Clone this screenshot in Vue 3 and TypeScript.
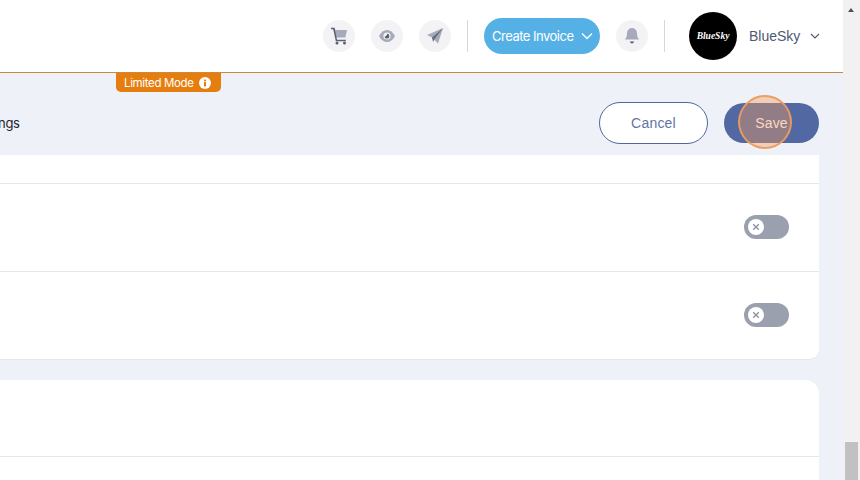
<script setup lang="ts">
const rows: number[] = [1, 2]
</script>

<template>
  <div class="page">
    <div class="main">
      <header class="topbar">
        <button class="round">
          <svg width="20" height="20" viewBox="0 0 20 20">
            <path d="M2 2.5h3l.6 2" fill="none" stroke="#5a6070" stroke-width="1.5" />
            <path d="M5.3 4H18l-1.6 7.6H6.8z" fill="#a6aaba" />
            <path d="M5 3l2.4 11.4h9.4" fill="none" stroke="#5a6070" stroke-width="1.5" />
            <circle cx="8" cy="17" r="1.5" fill="#5a6070" />
            <circle cx="15.5" cy="17" r="1.5" fill="#5a6070" />
          </svg>
        </button>
        <button class="round">
          <svg width="18" height="14" viewBox="0 0 18 14">
            <path d="M1 7C3 3 6 1 9 1s6 2 8 6c-2 4-5 6-8 6S3 11 1 7z" fill="#a6aaba" />
            <circle cx="9" cy="7" r="3.6" fill="#f3f3f5" />
            <path d="M9 4.8a2.4 2.4 0 1 1-2.4 2.6c1.4.2 2.6-1 2.4-2.6z" fill="#5a6070" />
          </svg>
        </button>
        <button class="round">
          <svg width="18" height="18" viewBox="0 0 18 18">
            <path d="M17 1L1 8l5 2.4z" fill="#a6aaba" />
            <path d="M17 1L6 10.4l6 6z" fill="#a6aaba" />
            <path d="M17 1L6 10.4l1 4.6 1.6-3z" fill="#666c7c" />
          </svg>
        </button>
        <span class="divider first"></span>
        <button class="create">
          <span>Create Invoice</span>
          <svg width="12" height="8" viewBox="0 0 12 8">
            <path d="M1 1.5l5 5 5-5" fill="none" stroke="#fff" stroke-width="1.3" />
          </svg>
        </button>
        <button class="round bell">
          <svg width="16" height="18" viewBox="0 0 16 18">
            <path d="M8 1c3 0 5 2.4 5 5.6 0 3 .8 4.6 2.2 6H.8C2.2 11.2 3 9.6 3 6.6 3 3.4 5 1 8 1z" fill="#a6aaba" />
            <path d="M5.8 14.6h4.4c-.4 1.3-1.2 2-2.2 2s-1.8-.7-2.2-2z" fill="#5a6070" />
          </svg>
        </button>
        <span class="divider second"></span>
        <div class="avatar"><span>BlueSky</span></div>
        <span class="account">BlueSky</span>
        <svg class="caret" width="10" height="6" viewBox="0 0 10 6">
          <path d="M1 1l4 4 4-4" fill="none" stroke="#4d5a72" stroke-width="1.1" />
        </svg>
      </header>

      <div class="content">
        <div class="limited">
          <span>Limited Mode</span>
          <svg width="12" height="12" viewBox="0 0 12 12">
            <circle cx="6" cy="6" r="6" fill="#fff" />
            <rect x="5" y="5" width="2" height="4.4" fill="#e67e0f" />
            <rect x="5" y="2.6" width="2" height="1.6" fill="#e67e0f" />
          </svg>
        </div>
        <div class="actions">
          <span class="crumb">ngs</span>
          <button class="cancel">Cancel</button>
          <button class="save">
            Save
            <span class="ripple"></span>
          </button>
        </div>
        <section class="card one">
          <div class="stub"></div>
          <div v-for="r in rows" :key="r" class="row">
            <div class="toggle">
              <span class="knob">
                <svg width="8" height="8" viewBox="0 0 8 8">
                  <path d="M1.2 1.2l5.6 5.6M6.8 1.2L1.2 6.8" stroke="#8f95a5" stroke-width="1.4" />
                </svg>
              </span>
            </div>
          </div>
        </section>
        <section class="card two">
          <div class="head"></div>
        </section>
      </div>
    </div>
    <aside class="scrollbar">
      <span class="arrow"></span>
      <span class="thumb"></span>
    </aside>
  </div>
</template>

<style>
html, body { margin: 0; overflow: hidden; }
</style>

<style scoped>
.page {
  width: 860px;
  height: 480px;
  display: flex;
  overflow: hidden;
  font-family: "Liberation Sans", Arial, sans-serif;
}
.main {
  width: 843px;
  height: 480px;
  display: flex;
  flex-direction: column;
  background: #eef1f8;
  overflow: hidden;
}
.topbar {
  height: 72px;
  flex: none;
  background: #fff;
  border-bottom: 1px solid #c58a43;
  display: flex;
  align-items: center;
  padding-left: 323px;
}
button { border: 0; padding: 0; font: inherit; cursor: pointer; }
.round {
  width: 32px;
  height: 32px;
  flex: none;
  margin-right: 16px;
  border-radius: 50%;
  background: #f3f3f5;
  display: flex;
  align-items: center;
  justify-content: center;
}
.divider {
  width: 1px;
  height: 32px;
  flex: none;
  background: #d6d7db;
}
.divider.first { margin-right: 16px; }
.divider.second { margin-right: 24px; }
.create {
  width: 116px;
  height: 36px;
  flex: none;
  margin-right: 16px;
  border-radius: 18px;
  background: #55b1e5;
  color: #fff;
  font-family: Inter, sans-serif;
  font-size: 13px;
  letter-spacing: -0.5px;
  display: flex;
  align-items: center;
  justify-content: space-between;
  padding: 0 7px 0 8px;
  box-sizing: border-box;
  white-space: nowrap;
}
.avatar {
  width: 48px;
  height: 48px;
  flex: none;
  border-radius: 50%;
  background: #000;
  color: #fff;
  display: flex;
  align-items: center;
  justify-content: center;
  font-family: "Liberation Serif", serif;
  font-style: italic;
  font-weight: 700;
  font-size: 9.5px;
  letter-spacing: 0;
}
.account {
  margin-left: 12px;
  color: #4d5a72;
  font-size: 14px;
}
.caret { margin-left: 10px; }
.content {
  position: relative;
  flex: 1;
  min-height: 0;
  padding-right: 24px;
  display: flex;
  flex-direction: column;
}
.limited {
  position: absolute;
  left: 116px;
  top: 0;
  width: 105px;
  height: 19px;
  box-sizing: border-box;
  padding: 0 10px 0 8px;
  display: flex;
  align-items: center;
  justify-content: space-between;
  border-radius: 0 0 5px 5px;
  background: #e67e0f;
  color: #fff;
  font-family: Inter, sans-serif;
  font-size: 11.5px;
  letter-spacing: -0.35px;
  white-space: nowrap;
}
.actions {
  height: 64px;
  padding-top: 18px;
  flex: none;
  display: flex;
  align-items: center;
}
.crumb {
  margin-left: -2px;
  margin-right: auto;
  font-family: Inter, sans-serif;
  font-size: 13px;
  letter-spacing: -0.3px;
  color: #22252b;
}
.cancel {
  width: 109px;
  height: 42px;
  margin-right: 16px;
  box-sizing: border-box;
  border: 1px solid #5068a0;
  border-radius: 21px;
  background: #fff;
  color: #5f75a5;
  font-size: 14px;
  letter-spacing: 0.2px;
}
.save {
  position: relative;
  width: 95px;
  height: 40px;
  border-radius: 20px;
  background: #5168a2;
  color: #fff;
  font-size: 14px;
  letter-spacing: 0.2px;
}
.ripple {
  position: absolute;
  left: 14px;
  top: -8px;
  width: 54px;
  height: 54px;
  box-sizing: border-box;
  border: 2.5px solid rgba(238, 155, 95, 0.95);
  border-radius: 50%;
  background: rgba(245, 155, 90, 0.4);
}
.card {
  background: #fff;
  flex: none;
  margin-left: -40px;
}
.card.one {
  border-bottom: 1px solid #e4e6ea;
  border-radius: 0 0 10px 10px;
}
.stub { height: 28px; }
.row {
  height: 86px;
  padding-bottom: 1px;
  border-top: 1px solid #e4e6ea;
  display: flex;
  align-items: center;
  justify-content: flex-end;
  padding-right: 30px;
}
.toggle {
  width: 45px;
  height: 24px;
  box-sizing: border-box;
  padding: 4px;
  border-radius: 12px;
  background: #9aa0ae;
  display: flex;
  align-items: center;
}
.knob {
  width: 16px;
  height: 16px;
  border-radius: 50%;
  background: #fff;
  display: flex;
  align-items: center;
  justify-content: center;
}
.card.two {
  margin-top: 20px;
  height: 120px;
  border-radius: 14px 14px 0 0;
}
.head {
  height: 76px;
  border-bottom: 1px solid #e4e6ea;
}
.scrollbar {
  position: relative;
  width: 17px;
  height: 480px;
  flex: none;
  background: #f1f1f1;
}
.arrow {
  position: absolute;
  left: 5px;
  top: 8px;
  width: 0;
  height: 0;
  border-left: 3.5px solid transparent;
  border-right: 3.5px solid transparent;
  border-bottom: 4px solid #505050;
}
.thumb {
  position: absolute;
  left: 2px;
  top: 442px;
  width: 13px;
  height: 38px;
  background: #c1c1c1;
}
</style>
